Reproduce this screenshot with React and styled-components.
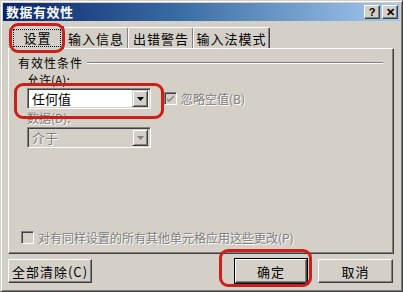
import React from 'react';
import styled, { createGlobalStyle } from 'styled-components';

const Global = createGlobalStyle`
  html, body {
    margin: 0;
    padding: 0;
    background: #d4d0c8;
  }
  body {
    font-family: "Noto Sans CJK SC", "Liberation Sans", sans-serif;
    font-size: 12px;
    color: #000;
  }
`;

const Window = styled.div`
  position: relative;
  width: 403px;
  height: 292px;
  box-sizing: border-box;
  background: #d4d0c8;
  border-top: 1px solid #d4d0c8;
  border-left: 1px solid #d4d0c8;
  border-right: 1px solid #404040;
  border-bottom: 1px solid #404040;
  box-shadow: inset 1px 1px 0 #fff, inset -1px -1px 0 #808080;
  padding: 2px;
  display: flex;
  flex-direction: column;
  overflow: hidden;
`;

const TitleBar = styled.div`
  height: 18px;
  display: flex;
  align-items: center;
  justify-content: space-between;
  padding: 0 2px 0 3px;
  background: linear-gradient(to right, #0a246a 0%, #3a6ea5 45%, #a6caf0 100%);
`;

const Title = styled.span`
  color: #fff;
  font-weight: bold;
  font-size: 13px;
  letter-spacing: 0.5px;
  line-height: 18px;
`;

const Caption = styled.div`
  display: flex;
  gap: 2px;
`;

const CapButton = styled.div`
  width: 16px;
  height: 14px;
  box-sizing: border-box;
  background: #d4d0c8;
  border-top: 1px solid #fff;
  border-left: 1px solid #fff;
  border-right: 1px solid #404040;
  border-bottom: 1px solid #404040;
  box-shadow: inset -1px -1px 0 #808080;
  display: flex;
  align-items: center;
  justify-content: center;
  font: bold 11px "Liberation Sans", sans-serif;
  line-height: 1;
`;

const Body = styled.div`
  flex: 1;
  display: flex;
  flex-direction: column;
  padding: 3px 6px 0 5px;
`;

const Tabs = styled.div`
  display: flex;
  align-items: flex-end;
  height: 24px;
  padding-left: 2px;
  position: relative;
  z-index: 1;
`;

const Tab = styled.div`
  width: ${p => p.$w}px;
  height: ${p => (p.$active ? 24 : 21)}px;
  box-sizing: border-box;
  margin-left: ${p => (p.$active ? '0' : '-1px')};
  background: #d4d0c8;
  border-top: 1px solid #fff;
  border-left: 1px solid #fff;
  border-right: 1px solid #404040;
  border-top-left-radius: 2px;
  border-top-right-radius: 2px;
  box-shadow: inset -1px 0 0 #808080;
  display: flex;
  align-items: center;
  justify-content: center;
  font-size: 13px;
  letter-spacing: 1px;
  margin-bottom: ${p => (p.$active ? '-1px' : '0')};
  position: relative;
  z-index: ${p => (p.$active ? 2 : 1)};
`;

const Focus = styled.span`
  border: 1px dotted #000;
  padding: 1px 8px 1px 9px;
  line-height: 14px;
`;

const Panel = styled.div`
  height: 206px;
  box-sizing: border-box;
  border-top: 1px solid #fff;
  border-left: 1px solid #fff;
  border-right: 1px solid #404040;
  border-bottom: 1px solid #404040;
  box-shadow: inset -1px -1px 0 #808080;
  padding: 7px 8px 0 9px;
  display: flex;
  flex-direction: column;
`;

const GroupHead = styled.div`
  display: flex;
  align-items: center;
  gap: 4px;
  font-size: 12px;
  letter-spacing: 1px;
  line-height: 14px;
`;

const Etch = styled.div`
  flex: 1;
  height: 0;
  border-top: 1px solid #808080;
  border-bottom: 1px solid #fff;
  margin-right: 2px;
`;

const Group = styled.div`
  padding-left: 9px;
  display: flex;
  flex-direction: column;
`;

const Label = styled.div`
  font-size: 12px;
  line-height: 14px;
  margin-top: ${p => p.$top || 0}px;
  color: ${p => (p.$disabled ? '#808080' : '#000')};
  text-shadow: ${p => (p.$disabled ? '1px 1px 0 #fff' : 'none')};
`;

const Row = styled.div`
  display: flex;
  align-items: center;
  gap: 13px;
  margin-top: ${p => p.$top ?? 2}px;
`;

const Select = styled.div`
  width: 124px;
  height: 21px;
  box-sizing: border-box;
  border-top: 1px solid #808080;
  border-left: 1px solid #808080;
  border-right: 1px solid #fff;
  border-bottom: 1px solid #fff;
  box-shadow: inset 1px 1px 0 #404040, inset -1px -1px 0 #d4d0c8;
  background: ${p => (p.$disabled ? '#d4d0c8' : '#fff')};
  display: flex;
  align-items: center;
  padding: 2px 2px 2px 4px;
  font-size: 13px;
  color: ${p => (p.$disabled ? '#808080' : '#000')};
  text-shadow: ${p => (p.$disabled ? '1px 1px 0 #fff' : 'none')};
`;

const SelectText = styled.span`
  flex: 1;
  line-height: 15px;
`;

const Arrow = styled.div`
  width: 16px;
  height: 17px;
  box-sizing: border-box;
  background: #d4d0c8;
  border-top: 1px solid #d4d0c8;
  border-left: 1px solid #d4d0c8;
  border-right: 1px solid #404040;
  border-bottom: 1px solid #404040;
  box-shadow: inset 1px 1px 0 #fff, inset -1px -1px 0 #808080;
  display: flex;
  align-items: center;
  justify-content: center;
`;

const Check = styled.div`
  width: 13px;
  height: 13px;
  box-sizing: border-box;
  border-top: 1px solid #808080;
  border-left: 1px solid #808080;
  border-right: 1px solid #fff;
  border-bottom: 1px solid #fff;
  box-shadow: inset 1px 1px 0 #404040, inset -1px -1px 0 #d4d0c8;
  background: #d4d0c8;
  display: flex;
  align-items: center;
  justify-content: center;
  flex-shrink: 0;
`;

const CheckRow = styled.div`
  display: flex;
  align-items: center;
  gap: 4px;
  font-size: 12px;
  color: #808080;
  text-shadow: 1px 1px 0 #fff;
`;

const Bottom = styled(CheckRow)`
  margin-top: auto;
  padding-left: 3px;
  margin-bottom: 7px;
`;

const Buttons = styled.div`
  display: flex;
  align-items: center;
  margin-top: 5px;
`;

const Button = styled.div`
  width: ${p => p.$w}px;
  height: 24px;
  box-sizing: border-box;
  margin-left: ${p => p.$ml || 0}px;
  background: #d4d0c8;
  border-top: 1px solid #fff;
  border-left: 1px solid #fff;
  border-right: 1px solid #404040;
  border-bottom: 1px solid #404040;
  box-shadow: inset -1px -1px 0 #808080;
  display: flex;
  align-items: center;
  justify-content: center;
  font-size: 13px;
  letter-spacing: 1px;
  ${p => p.$default && 'outline: 1px solid #000;'}
`;

const Mark = styled.div`
  position: absolute;
  left: ${p => p.$x}px;
  top: ${p => p.$y}px;
  width: ${p => p.$w}px;
  height: ${p => p.$h}px;
  border: 3px solid #cc1f1a;
  border-radius: 9px;
  box-sizing: border-box;
  pointer-events: none;
  z-index: 5;
`;

const ArrowIcon = ({ color = '#000' }) => (
  <svg width="7" height="4" viewBox="0 0 7 4">
    <path d="M0 0h7L3.5 4z" fill={color} />
  </svg>
);

const Tick = ({ color }) => (
  <svg width="9" height="9" viewBox="0 0 9 9">
    <path d="M1 4l2 2 5-5v2L3 8 1 6z" fill={color} />
  </svg>
);

const tabs = [
  { label: '输入信息', w: 66 },
  { label: '出错警告', w: 66 },
  { label: '输入法模式', w: 77 }
];

export default function App() {
  return (
    <>
      <Global />
      <Window>
        <TitleBar>
          <Title>数据有效性</Title>
          <Caption>
            <CapButton>?</CapButton>
            <CapButton>✕</CapButton>
          </Caption>
        </TitleBar>
        <Body>
          <Tabs>
            <Tab $active $w={54}>
              <Focus>设置</Focus>
            </Tab>
            {tabs.map(t => (
              <Tab key={t.label} $w={t.w}>
                {t.label}
              </Tab>
            ))}
          </Tabs>
          <Panel>
            <GroupHead>
              有效性条件
              <Etch />
            </GroupHead>
            <Group>
              <Label $top={3}>允许(A):</Label>
              <Row $top={1}>
                <Select>
                  <SelectText>任何值</SelectText>
                  <Arrow>
                    <ArrowIcon />
                  </Arrow>
                </Select>
                <CheckRow>
                  <Check>
                    <Tick color="#808080" />
                  </Check>
                  忽略空值(B)
                </CheckRow>
              </Row>
              <Label $top={2} $disabled>
                数据(D):
              </Label>
              <Row>
                <Select $disabled>
                  <SelectText>介于</SelectText>
                  <Arrow>
                    <ArrowIcon color="#808080" />
                  </Arrow>
                </Select>
              </Row>
            </Group>
            <Bottom>
              <Check />
              对有同样设置的所有其他单元格应用这些更改(P)
            </Bottom>
          </Panel>
          <Buttons>
            <Button $w={84}>全部清除(C)</Button>
            <Button $w={72} $ml={143} $default>
              确定
            </Button>
            <Button $w={75} $ml={11}>
              取消
            </Button>
          </Buttons>
        </Body>
        <Mark $x={8} $y={22} $w={56} $h={30} />
        <Mark $x={13} $y={82} $w={150} $h={36} />
        <Mark $x={218} $y={248} $w={93} $h={38} />
      </Window>
    </>
  );
}
